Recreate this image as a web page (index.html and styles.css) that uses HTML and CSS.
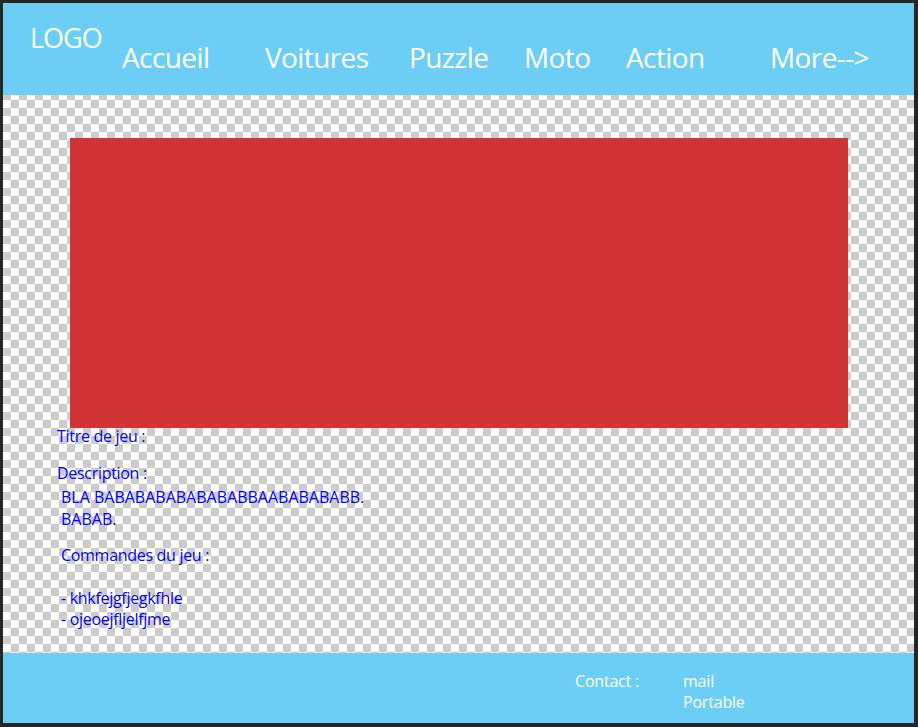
FILE: index.html
```html
<!DOCTYPE html>
<html lang="fr">
<head>
<meta charset="utf-8">
<title>Jeux</title>
<link rel="stylesheet" href="styles.css">
</head>
<body>
<div class="frame">
  <header class="header">
    <div class="logo">LOGO</div>
    <nav class="nav">
      <a class="nav-item">Accueil</a>
      <a class="nav-item">Voitures</a>
      <a class="nav-item">Puzzle</a>
      <a class="nav-item">Moto</a>
      <a class="nav-item">Action</a>
      <a class="nav-item">More--&gt;</a>
    </nav>
  </header>
  <main class="main">
    <div class="player"></div>
    <section class="info">
      <p class="label">Titre de jeu :</p>
      <p class="label label-desc">Description :</p>
      <div class="desc">
        <span class="desc-line">BLA BABABABABABABABBAABABABABB.</span>
        <span class="desc-line">BABAB.</span>
      </div>
      <p class="label label-cmd">Commandes du jeu :</p>
      <ul class="cmds">
        <li>- khkfejgfjegkfhle</li>
        <li>- ojeoejfljelfjme</li>
      </ul>
    </section>
  </main>
  <footer class="footer">
    <span class="contact">Contact :</span>
    <div class="contact-list">
      <span>mail</span>
      <span>Portable</span>
    </div>
  </footer>
</div>
</body>
</html>
```

FILE: styles.css
```css
html, body {
  margin: 0;
  padding: 0;
  background: #262626;
}
body {
  font-family: "Open Sans", "Liberation Sans", sans-serif;
}
.frame {
  width: 911px;
  height: 720px;
  margin: 3px 0 0 3px;
  display: flex;
  flex-direction: column;
}
.header {
  height: 92px;
  background: #6ccef5;
  display: flex;
  color: #fff;
}
.logo {
  font-size: 27px;
  line-height: 1;
  padding: 21px 0 0 27px;
  width: 92px;
  letter-spacing: -1px;
}
.nav {
  display: grid;
  grid-template-columns: 143px 144px 115px 102px 144px auto;
  padding-top: 40px;
}
.nav-item {
  font-size: 28px;
  line-height: 1;
  letter-spacing: -0.6px;
}
.main {
  flex: 1;
  background-color: #fff;
  background-image: conic-gradient(#ccc 25%, #fff 0 50%, #ccc 0 75%, #fff 0);
  background-size: 16px 16px;
  background-position: 0 5px;
  padding: 43px 0 0 0;
}
.player {
  margin-left: 67px;
  width: 778px;
  height: 290px;
  background: #d13434;
}
.info {
  padding-left: 54px;
  color: #0000ff;
  font-size: 16px;
  letter-spacing: -0.3px;
}
.label {
  margin: 0;
  line-height: 17px;
}
.label-desc {
  margin-top: 20px;
}
.desc {
  padding-left: 4px;
  display: flex;
  flex-direction: column;
  margin-top: 4px;
  letter-spacing: 0;
}
.desc-line {
  line-height: 22px;
  white-space: nowrap;
}
.label-cmd {
  padding-left: 4px;
  margin-top: 17px;
}
.cmds {
  list-style: none;
  margin: 24px 0 0;
  padding: 0 0 0 4px;
}
.cmds li {
  line-height: 21px;
}
.footer {
  height: 70px;
  background: #6ccef5;
  color: #fff;
  display: flex;
  font-size: 16px;
  letter-spacing: -0.2px;
  padding-top: 20px;
  box-sizing: border-box;
}
.contact {
  margin-left: 572px;
  width: 108px;
  line-height: 17px;
}
.contact-list {
  display: flex;
  flex-direction: column;
  line-height: 21px;
  margin-top: -2px;
}
```
